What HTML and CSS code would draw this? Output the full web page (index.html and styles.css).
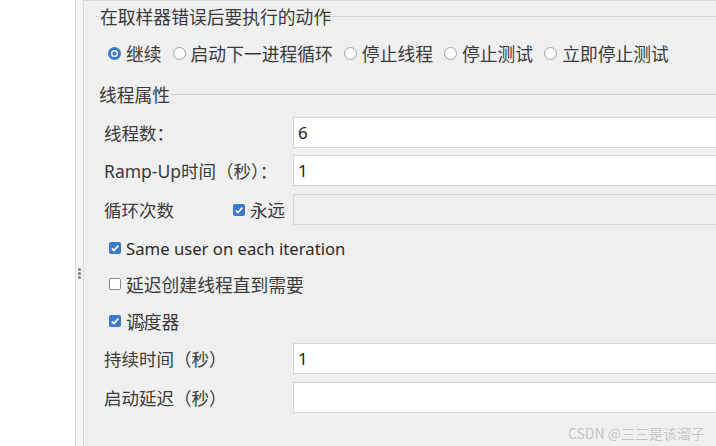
FILE: index.html
```html
<!DOCTYPE html>
<html lang="zh-CN">
<head>
<meta charset="utf-8">
<title>线程组</title>
<link rel="stylesheet" href="styles.css">
</head>
<body>
<div class="app">
  <div class="left"></div>
  <div class="splitter"><span class="grip"><i></i><i></i><i></i></span></div>
  <div class="panel">
    <section class="group g1">
      <div class="legend"><span>在取样器错误后要执行的动作</span></div>
      <div class="radios">
        <label class="radio"><span class="rb on"></span>继续</label>
        <label class="radio"><span class="rb"></span>启动下一进程循环</label>
        <label class="radio"><span class="rb"></span>停止线程</label>
        <label class="radio"><span class="rb"></span>停止测试</label>
        <label class="radio"><span class="rb"></span>立即停止测试</label>
      </div>
    </section>
    <section class="group g2">
      <div class="legend"><span>线程属性</span></div>
      <div class="field r1"><span class="lbl">线程数：</span><span class="input">6</span></div>
      <div class="field r2"><span class="lbl"><span class="latin">Ramp-Up</span>时间（秒）：</span><span class="input">1</span></div>
      <div class="field r3">
        <span class="lbl loop"><span class="name">循环次数</span>
          <svg class="cb" viewBox="0 0 12 12"><rect width="12" height="12" rx="2" fill="#3b7ad0"/><path d="M2.8 6.3 L5 8.5 L9.3 3.6" fill="none" stroke="#fff" stroke-width="1.7"/></svg>
          <span class="cbtext">永远</span>
        </span>
        <span class="input disabled"></span>
      </div>
      <div class="check c1">
        <svg class="cb" viewBox="0 0 12 12"><rect width="12" height="12" rx="2" fill="#3b7ad0"/><path d="M2.8 6.3 L5 8.5 L9.3 3.6" fill="none" stroke="#fff" stroke-width="1.7"/></svg>
        <span class="latin sameuser">Same user on each iteration</span>
      </div>
      <div class="check c2">
        <svg class="cb" viewBox="0 0 12 12"><rect x="0.5" y="0.5" width="11" height="11" rx="1.5" fill="#fff" stroke="#8a8a8a"/></svg>
        <span>延迟创建线程直到需要</span>
      </div>
      <div class="check c3">
        <svg class="cb" viewBox="0 0 12 12"><rect width="12" height="12" rx="2" fill="#3b7ad0"/><path d="M2.8 6.3 L5 8.5 L9.3 3.6" fill="none" stroke="#fff" stroke-width="1.7"/></svg>
        <span>调度器</span>
      </div>
      <div class="field r4"><span class="lbl">持续时间（秒）</span><span class="input">1</span></div>
      <div class="field r5"><span class="lbl">启动延迟（秒）</span><span class="input"></span></div>
    </section>
    <svg class="cursor" viewBox="0 0 11 16"><path d="M1 1 L1 13 L4 10.2 L6.2 15 L8 14.2 L5.8 9.5 L9.8 9.5 Z" fill="#fff" stroke="#222" stroke-width="1" stroke-linejoin="round"/></svg>
    <div class="watermark">CSDN @三三是该溜子</div>
  </div>
</div>
</body>
</html>
```

FILE: styles.css
```css
html, body {
  margin: 0;
  padding: 0;
}
body {
  width: 716px;
  height: 446px;
  overflow: hidden;
  background: #fff;
  font-family: "Noto Sans", "Noto Sans CJK SC", sans-serif;
  color: #3a3a3a;
}
.app {
  display: flex;
  height: 446px;
}
.left {
  width: 75px;
  background: #fff;
}
.splitter {
  width: 7px;
  border-left: 1px solid #d9d9d9;
  border-right: 1px solid #d9d9d9;
  background: #f5f5f5;
  display: flex;
  justify-content: center;
  padding-top: 268px;
}
.grip {
  display: flex;
  flex-direction: column;
  gap: 1px;
}
.grip i {
  display: block;
  width: 3px;
  height: 3px;
  border-radius: 50%;
  background: #7a7a7a;
}
.panel {
  flex: 1;
  background: #f0f0f0;
  border-top: 1px solid #dcdcdc;
  position: relative;
  overflow: hidden;
}
.legend {
  display: flex;
  align-items: center;
  height: 20px;
  font-family: "Noto Sans CJK SC", sans-serif;
  font-size: 17.8px;
}
.legend::before {
  content: "";
  width: 3px;
  border-top: 1px solid #d2d2d2;
}
.legend::after {
  content: "";
  flex: 1;
  border-top: 1px solid #d2d2d2;
}
.legend span {
  padding: 0 1px;
  line-height: 20px;
}
.g1 {
  margin-left: 12px;
  padding-top: 5px;
}
.radios {
  display: flex;
  align-items: center;
  height: 24px;
  margin-top: 15px;
  padding-left: 12px;
  gap: 11px;
  font-family: "Noto Sans CJK SC", sans-serif;
  font-size: 17.8px;
}
.radio {
  display: flex;
  align-items: center;
  gap: 5px;
  line-height: 24px;
}
.rb {
  width: 13px;
  height: 13px;
  box-sizing: border-box;
  border-radius: 50%;
  border: 1px solid #a2a2a2;
  background: #fff;
}
.rb.on {
  border: 3px solid #3b7ad0;
  background: radial-gradient(circle, #3b7ad0 0 1.8px, #fff 2.4px);
}
.g2 {
  margin-left: 11px;
  margin-top: 19px;
}
.field {
  display: flex;
  align-items: center;
  height: 31px;
  padding-left: 9px;
}
.lbl {
  width: 189px;
  flex: none;
  font-family: "Noto Sans CJK SC", sans-serif;
  font-size: 17.5px;
  line-height: 24px;
}
.latin {
  font-family: "Noto Sans", sans-serif;
}
.input {
  flex: 1;
  height: 31px;
  box-sizing: border-box;
  background: #fff;
  border: 1px solid #d6d6d6;
  border-right: none;
  padding-left: 4px;
  font-family: "Noto Sans", sans-serif;
  font-size: 17px;
  color: #222;
  display: flex;
  align-items: center;
}
.input.disabled {
  background: #f0f0f0;
}
.r1 { margin-top: 13px; }
.r2 { margin-top: 7px; }
.r3 { margin-top: 8px; }
.r4 { margin-top: 10px; }
.r5 { margin-top: 8px; }
.loop {
  display: flex;
  align-items: center;
}
.loop .name {
  width: 129px;
}
.cb {
  width: 12px;
  height: 12px;
  flex: none;
}
.cbtext {
  margin-left: 5px;
}
.check {
  display: flex;
  align-items: center;
  gap: 5px;
  height: 24px;
  padding-left: 14px;
  font-family: "Noto Sans CJK SC", sans-serif;
  font-size: 17.8px;
}
.sameuser {
  font-size: 16.7px;
  color: #2a2a2a;
}
.c1 { margin-top: 11px; }
.c2 { margin-top: 12px; }
.c3 { margin-top: 13px; }
.cursor {
  position: absolute;
  left: 52px;
  top: 312px;
  width: 11px;
  height: 16px;
  opacity: 0.8;
}
.watermark {
  position: absolute;
  right: 11px;
  bottom: 3px;
  font-family: "Noto Sans CJK SC", sans-serif;
  font-size: 14px;
  line-height: 20px;
  color: #c2c2c2;
  text-shadow: 0 0 1px #fff;
}
```
